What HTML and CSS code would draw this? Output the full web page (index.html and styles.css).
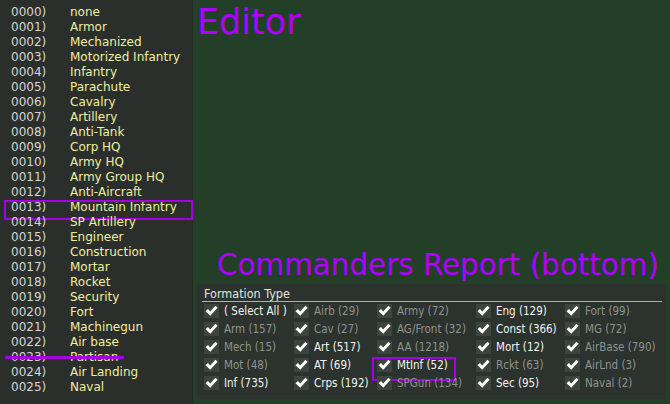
FILE: index.html
```html
<!DOCTYPE html>
<html lang="en">
<head>
    <meta charset="UTF-8">
    <meta name="viewport" content="width=device-width, initial-scale=1.0">
    <title>Unit Types</title>
    <link rel="stylesheet" href="styles.css">
</head>
<body>

    <!-- Lista de tipos de unidade -->
    <aside class="type-list">
        <div class="type-row"><span>0000)</span><span>none</span></div>
        <div class="type-row"><span>0001)</span><span>Armor</span></div>
        <div class="type-row"><span>0002)</span><span>Mechanized</span></div>
        <div class="type-row"><span>0003)</span><span>Motorized Infantry</span></div>
        <div class="type-row"><span>0004)</span><span>Infantry</span></div>
        <div class="type-row"><span>0005)</span><span>Parachute</span></div>
        <div class="type-row"><span>0006)</span><span>Cavalry</span></div>
        <div class="type-row"><span>0007)</span><span>Artillery</span></div>
        <div class="type-row"><span>0008)</span><span>Anti-Tank</span></div>
        <div class="type-row"><span>0009)</span><span>Corp HQ</span></div>
        <div class="type-row"><span>0010)</span><span>Army HQ</span></div>
        <div class="type-row"><span>0011)</span><span>Army Group HQ</span></div>
        <div class="type-row"><span>0012)</span><span>Anti-Aircraft</span></div>
        <div class="type-row marked"><span>0013)</span><span>Mountain Infantry</span></div>
        <div class="type-row"><span>0014)</span><span>SP Artillery</span></div>
        <div class="type-row"><span>0015)</span><span>Engineer</span></div>
        <div class="type-row"><span>0016)</span><span>Construction</span></div>
        <div class="type-row"><span>0017)</span><span>Mortar</span></div>
        <div class="type-row"><span>0018)</span><span>Rocket</span></div>
        <div class="type-row"><span>0019)</span><span>Security</span></div>
        <div class="type-row"><span>0020)</span><span>Fort</span></div>
        <div class="type-row"><span>0021)</span><span>Machinegun</span></div>
        <div class="type-row"><span>0022)</span><span>Air base</span></div>
        <div class="type-row struck"><span>0023)</span><span>Partisan</span></div>
        <div class="type-row"><span>0024)</span><span>Air Landing</span></div>
        <div class="type-row"><span>0025)</span><span>Naval</span></div>
    </aside>

    <main class="editor">
        <h1 class="label-editor">Editor</h1>

        <h2 class="label-report">Commanders Report (bottom)</h2>

        <!-- Filtro de formações -->
        <section class="formation-panel">
            <div class="formation-title">Formation Type</div>
            <div class="formation-grid" id="formationGrid"></div>
        </section>
    </main>

    <script>
        // Colunas preenchidas de cima para baixo
        const formations = [
            ['( Select All )', true], ['Arm (157)', false], ['Mech (15)', false], ['Mot (48)', false], ['Inf (735)', true],
            ['Airb (29)', false], ['Cav (27)', false], ['Art (517)', true], ['AT (69)', true], ['Crps (192)', true],
            ['Army (72)', false], ['AG/Front (32)', false], ['AA (1218)', false], ['MtInf (52)', true, 'marked'], ['SPGun (134)', false],
            ['Eng (129)', true], ['Const (366)', true], ['Mort (12)', true], ['Rckt (63)', false], ['Sec (95)', true],
            ['Fort (99)', false], ['MG (72)', false], ['AirBase (790)', false], ['AirLnd (3)', false], ['Naval (2)', false]
        ];

        // Marca de seleção cheia
        const checkSvg = '<svg viewBox="0 0 15 14" width="15" height="14">' +
            '<path d="M1.5 7.2 L4 5 L6.2 7.6 L11.4 1.8 L13.6 3.8 L6.3 11.8 Z" fill="#fff"/></svg>';

        const grid = document.getElementById('formationGrid');

        formations.forEach(([text, active, extra]) => {
            const item = document.createElement('label');
            item.className = 'formation-item' + (active ? ' active' : '') + (extra ? ' ' + extra : '');
            item.innerHTML = '<span class="check-box">' + checkSvg + '</span><span>' + text + '</span>';
            grid.appendChild(item);
        });
    </script>
</body>
</html>
```

FILE: styles.css
```css
* {
    margin: 0;
    padding: 0;
    box-sizing: border-box;
}

body {
    width: 670px;
    height: 404px;
    display: flex;
    overflow: hidden;
    background: #233f28;
    font-family: 'DejaVu Sans', sans-serif;
}

/* Lista da esquerda */
.type-list {
    width: 193px;
    flex-shrink: 0;
    padding-top: 5px;
    background: #2b2f2c;
    border-right: 1px solid #262a27;
}

.type-row {
    position: relative;
    display: grid;
    grid-template-columns: 59px auto;
    padding-left: 11px;
    height: 15px;
    line-height: 15px;
    font-size: 12px;
    white-space: nowrap;
}

.type-row span:first-child {
    color: #d3d6d3;
}

.type-row span:last-child {
    color: #efee9f;
}

.type-row.marked::after {
    content: '';
    position: absolute;
    left: 4px;
    top: 0;
    width: 185px;
    height: 16px;
    border: 2px solid #a400e6;
}

.type-row.struck::after {
    content: '';
    position: absolute;
    left: 5px;
    top: 6px;
    width: 119px;
    height: 3px;
    border-radius: 1px;
    background: #a400e6;
}

/* Área do editor */
.editor {
    flex: 1;
    display: flex;
    flex-direction: column;
}

.label-editor {
    padding-left: 4px;
    margin-top: 2px;
    font-size: 35px;
    font-weight: normal;
    line-height: 40px;
    color: #b000ff;
}

.label-report {
    margin-top: auto;
    margin-bottom: 2px;
    padding-left: 24px;
    font-size: 29.4px;
    font-weight: normal;
    line-height: 34px;
    color: #b000ff;
}

/* Painel de filtros */
.formation-panel {
    margin: 0 4px 5px 4px;
    padding: 0 4px 7px 7px;
    background: #2c322d;
    font-family: 'DejaVu Sans Condensed', 'DejaVu Sans', sans-serif;
    font-stretch: condensed;
}

.formation-title {
    height: 18px;
    margin-left: -2px;
    padding-left: 2px;
    line-height: 20px;
    font-size: 12.5px;
    color: #e2e4e2;
    border-bottom: 1px solid #aeb2ae;
}

.formation-grid {
    display: grid;
    grid-template-columns: 90px 83px 99px 89px auto;
    grid-template-rows: repeat(5, 18px);
    grid-auto-flow: column;
}

.formation-item {
    position: relative;
    display: flex;
    align-items: center;
    gap: 5px;
    font-size: 11.5px;
    color: #8e938f;
    white-space: nowrap;
}

.formation-item.active {
    color: #f4f5f4;
}

.check-box {
    display: flex;
    width: 15px;
    height: 14px;
    background: #3d433e;
}

.formation-item.marked::after {
    content: '';
    position: absolute;
    left: -5px;
    top: 1px;
    width: 80px;
    height: 20px;
    border: 2px solid #a400e6;
}
```
